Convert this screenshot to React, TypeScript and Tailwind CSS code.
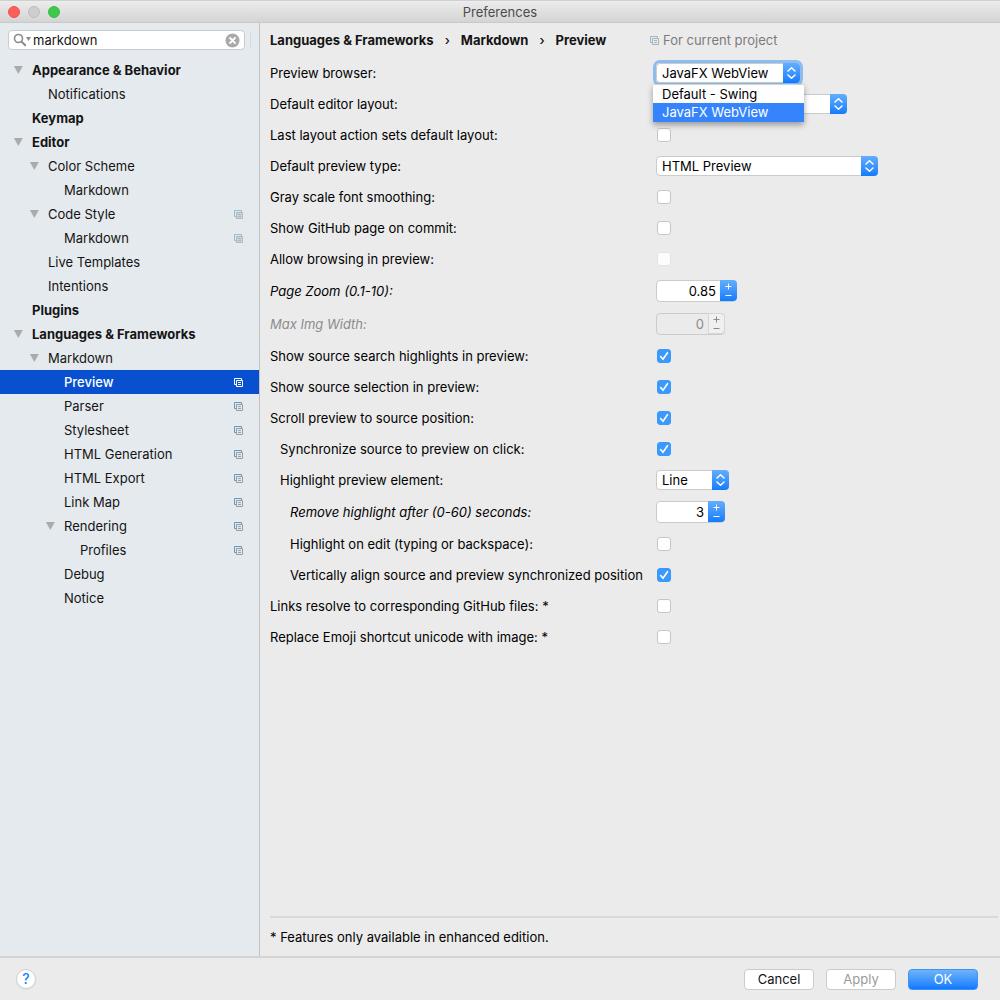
import { useState } from "react";
import type { ReactNode } from "react";

type TreeItem = {
  name: string;
  level: number;
  open?: boolean;
  bold?: boolean;
  project?: "full" | "dim";
};

const tree: TreeItem[] = [
  { name: "Appearance & Behavior", level: 0, open: true, bold: true },
  { name: "Notifications", level: 1 },
  { name: "Keymap", level: 0, bold: true },
  { name: "Editor", level: 0, open: true, bold: true },
  { name: "Color Scheme", level: 1, open: true },
  { name: "Markdown", level: 2 },
  { name: "Code Style", level: 1, open: true, project: "dim" },
  { name: "Markdown", level: 2, project: "dim" },
  { name: "Live Templates", level: 1 },
  { name: "Intentions", level: 1 },
  { name: "Plugins", level: 0, bold: true },
  { name: "Languages & Frameworks", level: 0, open: true, bold: true },
  { name: "Markdown", level: 1, open: true },
  { name: "Preview", level: 2, project: "full" },
  { name: "Parser", level: 2, project: "full" },
  { name: "Stylesheet", level: 2, project: "full" },
  { name: "HTML Generation", level: 2, project: "full" },
  { name: "HTML Export", level: 2, project: "full" },
  { name: "Link Map", level: 2, project: "full" },
  { name: "Rendering", level: 2, open: true, project: "full" },
  { name: "Profiles", level: 3, project: "full" },
  { name: "Debug", level: 2 },
  { name: "Notice", level: 2 },
];

const indents = ["pl-[13px]", "pl-[29px]", "pl-[45px]", "pl-[61px]"];

function ProjectIcon({ back, front, fill = "none" }: { back: string; front: string; fill?: string }) {
  return (
    <svg aria-hidden="true" className="h-[9px] w-[9px] shrink-0" fill="none" viewBox="0 0 9 9">
      <path d="M2 6.500H.500v-6h7V2" stroke={back} />
      <path d="M2.500 2.500h6v6h-6z" fill={fill} stroke={front} />
      <path d="M4 4.500h3M4 6.500h3" stroke={front} />
    </svg>
  );
}

function Tree() {
  const [selected, setSelected] = useState(13);

  return (
    <ul className="mt-2">
      {tree.map((item, index) => {
        const active = index === selected;
        const dim = item.project === "dim";
        return (
          <li key={index}>
            <button
              className={`flex h-6 w-full items-center pr-4 text-left ${indents[item.level]} ${
                active ? "bg-[#0850d0] font-medium text-white" : ""
              } ${item.bold ? "font-bold" : ""}`}
              onClick={() => setSelected(index)}
              type="button"
            >
              <span className="w-[19px] shrink-0">
                {item.open && (
                  <svg aria-hidden="true" className="h-[8px] w-[10px]" viewBox="0 0 10 8">
                    <path d="M.8 0h9L5.300 8z" fill="#a9abac" />
                  </svg>
                )}
              </span>
              <span className="grow">{item.name}</span>
              {item.project && (
                <ProjectIcon
                  back={active ? "#ffffff" : dim ? "#8fbdd6" : "#5b9bbf"}
                  fill={dim ? "#cfd3d6" : "none"}
                  front={active ? "#ffffff" : dim ? "#b4b7b9" : "#999c9f"}
                />
              )}
            </button>
          </li>
        );
      })}
    </ul>
  );
}

function Row({
  id,
  label,
  indent = "",
  tone = "",
  tall = false,
  children,
}: {
  id: string;
  label: string;
  indent?: string;
  tone?: string;
  tall?: boolean;
  children: ReactNode;
}) {
  return (
    <div className={`flex items-center ${tall ? "h-[33px]" : "h-[31px]"}`}>
      <label className={`w-[386px] shrink-0 whitespace-nowrap ${indent} ${tone}`} htmlFor={id}>
        {label}
      </label>
      {children}
    </div>
  );
}

function Check({ id, on = false, disabled = false }: { id: string; on?: boolean; disabled?: boolean }) {
  return (
    <span className="grid">
      <input
        className="peer col-start-1 row-start-1 ml-px h-[14px] w-[14px] appearance-none rounded-[3px] border border-[#c6c6c6] bg-white checked:border-[#3b99fc] checked:bg-[#3b99fc] disabled:border-[#e4e4e4] disabled:bg-[#fcfcfc]"
        defaultChecked={on}
        disabled={disabled}
        id={id}
        type="checkbox"
      />
      <svg
        aria-hidden="true"
        className="pointer-events-none invisible col-start-1 row-start-1 ml-px h-[14px] w-[14px] peer-checked:visible"
        fill="none"
        viewBox="0 0 14 14"
      >
        <path d="M3.600 7.500l2.400 2.800L10.500 3.700" stroke="#fff" strokeLinecap="round" strokeWidth="1.600" />
      </svg>
    </span>
  );
}

function Select({
  id,
  options,
  value,
  width,
  focused = false,
}: {
  id: string;
  options: string[];
  value: string;
  width: string;
  focused?: boolean;
}) {
  return (
    <span className={`grid h-5 rounded-[4px] ${width} ${focused ? "ring-[3px] ring-[#8fbcf0]" : ""}`}>
      <select
        className="col-start-1 row-start-1 h-5 w-full appearance-none rounded-[4px] border border-[#cbcbcb] bg-white pl-[5px] leading-4 outline-none"
        defaultValue={value}
        id={id}
      >
        {options.map((option) => (
          <option key={option}>{option}</option>
        ))}
      </select>
      <span className="pointer-events-none col-start-1 row-start-1 flex h-5 w-[17px] items-center justify-center justify-self-end rounded-r-[4px] bg-linear-to-b from-[#62aefb] to-[#0f7bfd]">
        <svg aria-hidden="true" className="h-3 w-[9px]" fill="none" viewBox="0 0 9 12">
          <path
            d="M1 4l3.500-3.200L8 4M1 8l3.500 3.200L8 8"
            stroke="#fff"
            strokeLinecap="round"
            strokeLinejoin="round"
            strokeWidth="1.500"
          />
        </svg>
      </span>
    </span>
  );
}

function Spinner({ id, value, width, disabled = false }: { id: string; value: string; width: string; disabled?: boolean }) {
  const [text, setText] = useState(value);
  const step = value.includes(".") ? 0.05 : 1;
  const change = (by: number) => setText(String(Math.round((Number(text) + by) * 100) / 100));

  return (
    <span
      className={`flex h-[22px] rounded-[4px] border border-[#cbcbcb] ${width} ${disabled ? "bg-[#ebebeb]" : "bg-white"}`}
    >
      <input
        className="w-0 grow bg-transparent pr-1 text-right outline-none disabled:text-[#8a8a8a]"
        disabled={disabled}
        id={id}
        onChange={(event) => setText(event.target.value)}
        value={text}
      />
      <span
        className={`-my-px -mr-px flex h-[21px] w-[17px] flex-col items-center justify-center rounded-r-[4px] ${
          disabled ? "border border-[#d6d6d6] bg-[#f0f0f0] text-[#8a8a8a]" : "bg-linear-to-b from-[#62aefb] to-[#0f7bfd] text-white"
        }`}
      >
        <button aria-label="Increase" disabled={disabled} onClick={() => change(step)} type="button">
          <svg aria-hidden="true" className="h-[10px] w-[9px]" viewBox="0 0 9 10">
            <path d="M1.500 5.500h6M4.500 2.500v6" stroke="currentColor" />
          </svg>
        </button>
        <button aria-label="Decrease" disabled={disabled} onClick={() => change(-step)} type="button">
          <svg aria-hidden="true" className="h-[9px] w-[9px]" viewBox="0 0 9 9">
            <path d="M1.500 4.500h6" stroke="currentColor" />
          </svg>
        </button>
      </span>
    </span>
  );
}

function Sidebar() {
  return (
    <aside className="w-[260px] shrink-0 border-r border-[#c0c2c3] bg-[#e5eaee] pt-[7px]">
      <div className="flex items-center pr-2 pl-2">
        <label className="flex h-5 grow items-center rounded-[4px] border border-[#c8ccd0] bg-white pr-1 pl-1">
          <svg aria-hidden="true" className="h-[14px] w-[20px] shrink-0" fill="none" viewBox="0 0 20 14">
            <circle cx="5.500" cy="5.500" r="4" stroke="#8a8a8a" strokeWidth="1.600" />
            <path d="M8.600 8.600l3.600 3.600" stroke="#8a8a8a" strokeLinecap="round" strokeWidth="2" />
            <path d="M13 4h5l-2.500 4z" fill="#8a8a8a" />
          </svg>
          <input aria-label="Search settings" className="w-0 grow bg-transparent outline-none" defaultValue="markdown" />
          <button aria-label="Clear search" type="button">
            <svg aria-hidden="true" className="h-[15px] w-[15px]" viewBox="0 0 15 15">
              <circle cx="7.500" cy="7.500" fill="#a9a9a9" r="7" />
              <path d="M5 5l5 5M10 5l-5 5" stroke="#fff" strokeLinecap="round" strokeWidth="1.800" />
            </svg>
          </button>
        </label>
        <span className="ml-[5px] h-4 w-px bg-[#d4d9dd]" />
      </div>
      <Tree />
    </aside>
  );
}

function BrowserPopup() {
  return (
    <ul
      aria-label="Preview browser"
      className="absolute top-[27px] left-[383px] w-[151px] border-t border-[#d5d5d5] bg-white/95 shadow-[0_3px_6px_rgba(0,0,0,0.35)]"
      role="listbox"
    >
      <li aria-selected="false" className="h-[18px] pl-[9px] leading-[18px]" role="option">
        Default - Swing
      </li>
      <li aria-selected="true" className="h-[19px] bg-[#3584fc] pl-[9px] leading-[18px] text-white" role="option">
        JavaFX WebView
      </li>
    </ul>
  );
}

function PreviewSettings() {
  return (
    <form className="flex flex-col text-black">
      <div className="relative">
        <Row id="browser" label="Preview browser:">
          <Select focused id="browser" options={["Default - Swing", "JavaFX WebView"]} value="JavaFX WebView" width="w-36" />
        </Row>
        <BrowserPopup />
      </div>
      <Row id="layout" label="Default editor layout:">
        <Select id="layout" options={["Show editor only"]} value="Show editor only" width="w-[191px]" />
      </Row>
      <Row id="last-layout" label="Last layout action sets default layout:">
        <Check id="last-layout" />
      </Row>
      <Row id="preview-type" label="Default preview type:">
        <Select id="preview-type" options={["HTML Preview"]} value="HTML Preview" width="w-[222px]" />
      </Row>
      <Row id="gray-scale" label="Gray scale font smoothing:">
        <Check id="gray-scale" />
      </Row>
      <Row id="github-page" label="Show GitHub page on commit:">
        <Check id="github-page" />
      </Row>
      <Row id="browsing" label="Allow browsing in preview:">
        <Check disabled id="browsing" />
      </Row>
      <Row id="zoom" label="Page Zoom (0.1-10):" tall tone="italic">
        <Spinner id="zoom" value="0.85" width="w-[81px]" />
      </Row>
      <Row id="img-width" label="Max Img Width:" tall tone="italic text-[#8c8c8c]">
        <Spinner disabled id="img-width" value="0" width="w-[69px]" />
      </Row>
      <Row id="search-highlights" label="Show source search highlights in preview:">
        <Check id="search-highlights" on />
      </Row>
      <Row id="source-selection" label="Show source selection in preview:">
        <Check id="source-selection" on />
      </Row>
      <Row id="scroll" label="Scroll preview to source position:">
        <Check id="scroll" on />
      </Row>
      <Row id="sync" indent="pl-[10px]" label="Synchronize source to preview on click:">
        <Check id="sync" on />
      </Row>
      <Row id="highlight" indent="pl-[10px]" label="Highlight preview element:">
        <Select id="highlight" options={["Line", "None"]} value="Line" width="w-[73px]" />
      </Row>
      <Row id="remove" indent="pl-5" label="Remove highlight after (0-60) seconds:" tall tone="italic">
        <Spinner id="remove" value="3" width="w-[69px]" />
      </Row>
      <Row id="on-edit" indent="pl-5" label="Highlight on edit (typing or backspace):">
        <Check id="on-edit" />
      </Row>
      <Row id="align" indent="pl-5" label="Vertically align source and preview synchronized position">
        <Check id="align" on />
      </Row>
      <Row id="links" label="Links resolve to corresponding GitHub files: *">
        <Check id="links" />
      </Row>
      <Row id="emoji" label="Replace Emoji shortcut unicode with image: *">
        <Check id="emoji" />
      </Row>
    </form>
  );
}

export default function App() {
  return (
    <div className="flex min-h-screen flex-col bg-[#ebebeb] font-['Inter',sans-serif] text-[13px] leading-4 text-[#141414]">
      <header className="grid h-[23px] grid-cols-[1fr_auto_1fr] items-center border-t border-b border-t-[#d0d0d0] border-b-[#c9c9c9] bg-linear-to-b from-[#ececec] to-[#d4d4d4]">
        <div className="flex gap-2 pl-2">
          <button aria-label="Close" className="h-3 w-3 rounded-full border border-[#f2544d] bg-[#fc605b]" type="button" />
          <button aria-label="Minimize" className="h-3 w-3 rounded-full border border-[#bdbdbd] bg-[#cecece]" type="button" />
          <button aria-label="Zoom" className="h-3 w-3 rounded-full border border-[#38bd45] bg-[#3ec94b]" type="button" />
        </div>
        <h1 className="text-[#4c4c4c]">Preferences</h1>
      </header>

      <div className="flex grow">
        <Sidebar />
        <main className="flex grow flex-col pr-[2px] pl-[10px]">
          <div className="flex h-[34px] items-center">
            <nav aria-label="Breadcrumb" className="flex w-[380px] shrink-0 items-center gap-[11px] font-bold">
              <span>Languages &amp; Frameworks</span>
              <span className="font-medium">›</span>
              <span>Markdown</span>
              <span className="font-medium">›</span>
              <span>Preview</span>
            </nav>
            <span className="flex items-center gap-1 text-[#7c7c7c]">
              <ProjectIcon back="#8fbdd6" front="#b0b0b0" />
              For current project
            </span>
          </div>
          <PreviewSettings />
          <p className="mt-auto h-10 border-t-2 border-[#d9d9d9] pt-[11px] text-black">
            * Features only available in enhanced edition.
          </p>
        </main>
      </div>

      <footer className="flex h-11 items-center gap-3 border-t-2 border-[#d3d3d3] pr-[22px] pl-4">
        <button
          className="mr-auto h-5 w-5 rounded-full border border-[#d0d0d0] bg-white text-sm leading-4 font-medium text-[#1482ff] shadow-xs"
          type="button"
        >
          ?
        </button>
        <button className="h-[21px] w-[70px] rounded-[4px] border border-[#cbcbcb] bg-white" type="button">
          Cancel
        </button>
        <button
          className="h-[21px] w-[70px] rounded-[4px] border border-[#cbcbcb] bg-white text-[#9b9b9b]"
          disabled
          type="button"
        >
          Apply
        </button>
        <button
          className="h-[21px] w-[70px] rounded-[4px] border border-[#3c93f5] bg-linear-to-b from-[#6cb3fa] to-[#087aff] text-white"
          type="button"
        >
          OK
        </button>
      </footer>
    </div>
  );
}
